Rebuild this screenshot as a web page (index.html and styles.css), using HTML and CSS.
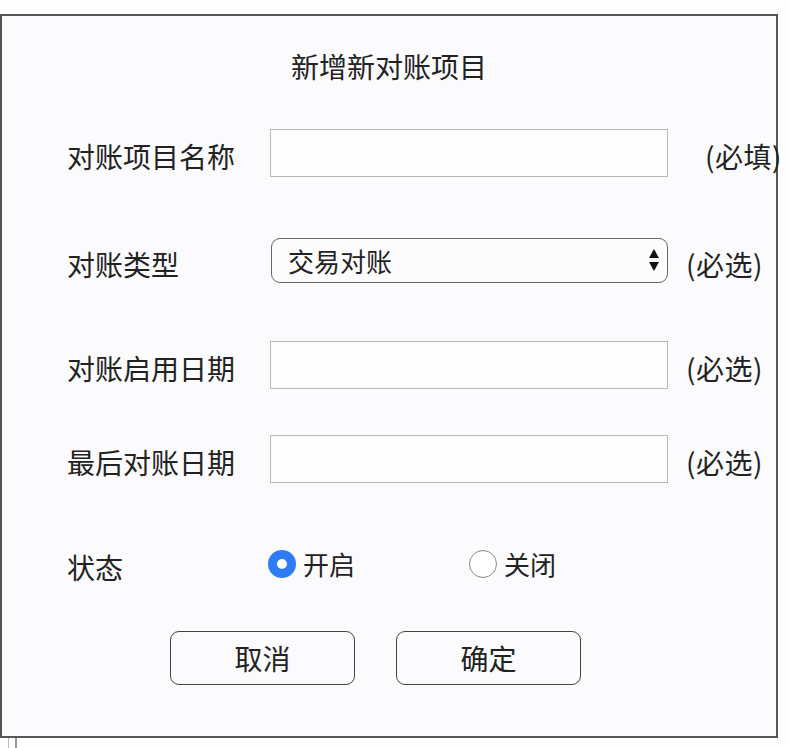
FILE: index.html
```html
<!DOCTYPE html>
<html lang="zh-CN">
<head>
<meta charset="utf-8">
<title>新增新对账项目</title>
<link rel="stylesheet" href="styles.css">
</head>
<body>
<div class="dialog">
  <h1 class="title">新增新对账项目</h1>

  <div class="row row-name">
    <label class="label">对账项目名称</label>
    <input class="field" type="text">
    <span class="hint hint-wide">(必填)</span>
  </div>

  <div class="row row-type">
    <label class="label">对账类型</label>
    <div class="select-wrap">
      <select class="select">
        <option>交易对账</option>
      </select>
      <svg class="select-arrow" width="12" height="26" viewBox="0 0 12 26">
        <path d="M6 2 L11 11 L1 11 Z" fill="#111"/>
        <path d="M1 15 L11 15 L6 24 Z" fill="#111"/>
      </svg>
    </div>
    <span class="hint">(必选)</span>
  </div>

  <div class="row row-start">
    <label class="label">对账启用日期</label>
    <input class="field" type="text">
    <span class="hint">(必选)</span>
  </div>

  <div class="row row-last">
    <label class="label">最后对账日期</label>
    <input class="field" type="text">
    <span class="hint">(必选)</span>
  </div>

  <div class="row row-status">
    <label class="label">状态</label>
    <div class="options">
      <span class="option">
        <span class="radio radio-on"></span>
        <span class="option-text">开启</span>
      </span>
      <span class="option">
        <span class="radio"></span>
        <span class="option-text">关闭</span>
      </span>
    </div>
  </div>

  <div class="actions">
    <button class="btn" type="button">取消</button>
    <button class="btn" type="button">确定</button>
  </div>
</div>
<div class="stub"></div>
</body>
</html>
```

FILE: styles.css
```css
html, body {
  margin: 0;
  padding: 0;
  background: #fefefe;
}

body {
  font-family: "Noto Sans CJK SC", "Noto Sans", sans-serif;
  color: #222;
  overflow: hidden;
}

.dialog {
  box-sizing: border-box;
  width: 778px;
  height: 724px;
  margin-top: 14px;
  border: 2px solid #555;
  background: #fbfafc;
  display: flex;
  flex-direction: column;
}

.title {
  margin: 32px 0 0 0;
  font-size: 28px;
  font-weight: 400;
  line-height: 36px;
  text-align: center;
  color: #222;
}

.row {
  display: flex;
  align-items: center;
  padding-left: 65px;
  height: 48px;
}

.row-name { margin-top: 45px; }
.row-type { margin-top: 61px; height: 45px; }
.row-start { margin-top: 58px; }
.row-last { margin-top: 46px; }
.row-status { margin-top: 57px; }

.label {
  box-sizing: border-box;
  width: 203px;
  flex: none;
  font-size: 28px;
  line-height: 1;
  padding-top: 6px;
  color: #222;
}

.field {
  box-sizing: border-box;
  width: 398px;
  height: 48px;
  margin: 0;
  border: 1px solid #b9b9b9;
  border-radius: 0;
  background: #fdfdfe;
  flex: none;
  outline: none;
}

.hint {
  font-size: 28px;
  line-height: 1;
  padding-top: 6px;
  margin-left: 18px;
  white-space: nowrap;
  letter-spacing: 0.5px;
  color: #222;
}

.hint-wide {
  margin-left: 37px;
}

.select-wrap {
  position: relative;
  margin-left: 1px;
  width: 397px;
  height: 45px;
  flex: none;
}

.select {
  -webkit-appearance: none;
  appearance: none;
  box-sizing: border-box;
  width: 100%;
  height: 100%;
  margin: 0;
  padding: 0 0 0 16px;
  border: 1px solid #666;
  border-radius: 9px;
  background: #fcfcfd;
  font-family: "Noto Sans CJK SC", "Noto Sans", sans-serif;
  font-size: 26px;
  color: #222;
  outline: none;
}

.select-arrow {
  position: absolute;
  right: 8px;
  top: 9px;
  pointer-events: none;
}

.options {
  display: flex;
  align-items: center;
  margin-left: -2px;
}

.option {
  display: flex;
  align-items: center;
  width: 201px;
}

.radio {
  box-sizing: border-box;
  width: 28px;
  height: 28px;
  border-radius: 50%;
  border: 1.5px solid #8a8a8a;
  background: #fff;
  flex: none;
}

.radio-on {
  border: 9.5px solid #2f7bf5;
  background: #fff;
}

.option-text {
  margin-left: 7px;
  font-size: 26px;
  line-height: 1;
  padding-top: 0;
  color: #222;
}

.actions {
  display: flex;
  gap: 41px;
  margin-top: 43px;
  padding-left: 168px;
}

.btn {
  box-sizing: border-box;
  width: 185px;
  height: 54px;
  margin: 0;
  padding: 0;
  border: 1.5px solid #444;
  border-radius: 9px;
  background: #fbfafc;
  font-family: "Noto Sans CJK SC", "Noto Sans", sans-serif;
  font-size: 28px;
  color: #222;
}

.stub {
  box-sizing: border-box;
  width: 9px;
  height: 11px;
  margin-left: 8px;
  border-left: 1px solid #bbb;
  border-right: 2px solid #999;
  background: #fff;
}
```
